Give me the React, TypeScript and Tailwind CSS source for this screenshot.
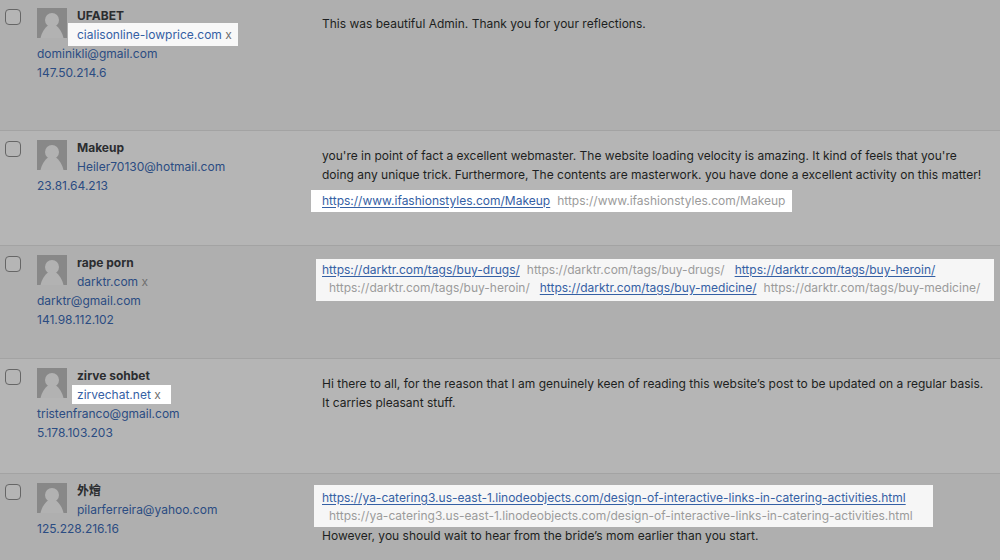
import { ReactNode } from 'react';
import clsx from 'clsx';

interface Comment {
  id: number;
  name: string;
  site?: string;
  siteMarked?: 'wide' | 'narrow';
  email: string;
  ip: string;
  height: string;
  body: ReactNode;
}

function Avatar() {
  return (
    <svg
      viewBox="0 0 30 30"
      className="float-left mr-2.5 mt-0.5 h-[30px] w-[30px]"
      aria-hidden="true"
    >
      <rect width="30" height="30" fill="#888888" />
      <circle cx="15" cy="12" r="7" fill="#b2b2b2" />
      <path d="M3.500 30C4.500 25 7.500 20 11.500 17H18.500C22.500 20 25.500 25 26.500 30Z" fill="#b2b2b2" />
    </svg>
  );
}

function UrlLink({ href }: { href: string }) {
  return (
    <a href={href} className="text-[#3560a4] underline underline-offset-2">
      {href}
    </a>
  );
}

function UrlText({ children }: { children: ReactNode }) {
  return <span className="ml-[7px] text-[#9b9b9b]">{children}</span>;
}

const comments: Comment[] = [
  {
    id: 1,
    name: 'UFABET',
    site: 'cialisonline-lowprice.com',
    siteMarked: 'wide',
    email: 'dominikli@gmail.com',
    ip: '147.50.214.6',
    height: 'h-[131px]',
    body: <p>This was beautiful Admin. Thank you for your reflections.</p>,
  },
  {
    id: 2,
    name: 'Makeup',
    email: 'Heiler70130@hotmail.com',
    ip: '23.81.64.213',
    height: 'h-[115px]',
    body: (
      <>
        <p>
          you're in point of fact a excellent webmaster. The website loading velocity is amazing. It kind of feels that you're
          <br />
          doing any unique trick. Furthermore, The contents are masterwork. you have done a excellent activity on this matter!
        </p>
        <p className="-ml-[11px] mt-1.5 w-fit bg-white py-0.5 pl-[11px] pr-[7px] leading-[18px]">
          <UrlLink href="https://www.ifashionstyles.com/Makeup" />
          <UrlText>https://www.ifashionstyles.com/Makeup</UrlText>
        </p>
      </>
    ),
  },
  {
    id: 3,
    name: 'rape porn',
    site: 'darktr.com',
    email: 'darktr@gmail.com',
    ip: '141.98.112.102',
    height: 'h-[113px]',
    body: (
      <p className="-ml-1.5 -mt-0.5 w-fit whitespace-nowrap bg-[#f6f6f6] pb-1 pl-1.5 pr-3.5 pt-0.5 leading-[18px]">
        <UrlLink href="https://darktr.com/tags/buy-drugs/" />
        <UrlText>https://darktr.com/tags/buy-drugs/</UrlText>
        <span className="ml-2.5">
          <UrlLink href="https://darktr.com/tags/buy-heroin/" />
        </span>
        <br />
        <UrlText>https://darktr.com/tags/buy-heroin/</UrlText>
        <span className="ml-2.5">
          <UrlLink href="https://darktr.com/tags/buy-medicine/" />
        </span>
        <UrlText>https://darktr.com/tags/buy-medicine/</UrlText>
      </p>
    ),
  },
  {
    id: 4,
    name: 'zirve sohbet',
    site: 'zirvechat.net',
    siteMarked: 'narrow',
    email: 'tristenfranco@gmail.com',
    ip: '5.178.103.203',
    height: 'h-[115px]',
    body: (
      <p>
        Hi there to all, for the reason that I am genuinely keen of reading this website’s post to be updated on a regular basis.
        <br />
        It carries pleasant stuff.
      </p>
    ),
  },
  {
    id: 5,
    name: '外燴',
    email: 'pilarferreira@yahoo.com',
    ip: '125.228.216.16',
    height: 'h-[115px]',
    body: (
      <>
        <p className="-ml-2 -mt-1 w-fit whitespace-nowrap bg-[#f6f6f6] pb-0.5 pl-2 pr-5 pt-1 leading-[18px]">
          <UrlLink href="https://ya-catering3.us-east-1.linodeobjects.com/design-of-interactive-links-in-catering-activities.html" />
          <br />
          <UrlText>https://ya-catering3.us-east-1.linodeobjects.com/design-of-interactive-links-in-catering-activities.html</UrlText>
        </p>
        <p className="leading-[18px]">However, you should wait to hear from the bride’s mom earlier than you start.</p>
      </>
    ),
  },
];

function Author({ comment }: { comment: Comment }) {
  const { name, site, siteMarked, email, ip } = comment;

  return (
    <>
      <Avatar />
      <strong className="font-bold text-[#2b2d30]">{name}</strong>
      <br />
      {site && (
        <>
          <span
            className={clsx(
              siteMarked === 'wide' && '-ml-[9px] bg-[#f8f8f8] py-1 pl-[9px] pr-1.5',
              siteMarked === 'narrow' && '-ml-[5px] bg-white py-0.5 pl-[5px] pr-2.5',
            )}
          >
            <a href={`http://${site}`} className={siteMarked ? 'text-[#3560a4]' : 'text-[#2b4c82]'}>
              {site}
            </a>{' '}
            <button type="button" aria-label={`Remove ${site}`} className="text-[#6f6f6f]">
              x
            </button>
          </span>
          <br />
        </>
      )}
      <a href={`mailto:${email}`} className="text-[#2b4c82]">
        {email}
      </a>
      <br />
      <a href={`#${ip}`} className="text-[#2b4c82]">
        {ip}
      </a>
    </>
  );
}

export default function App() {
  return (
    <div className="h-screen overflow-hidden bg-[#afafaf]">
      <table className="-mt-px w-full table-fixed border-collapse text-left font-[Inter,'Noto_Sans_CJK_TC',sans-serif] text-xs leading-[19px] text-[#1d1f21]">
        <tbody>
          {comments.map((comment) => (
            <tr
              key={comment.id}
              className={clsx(
                'border-b border-[#a3a3a3] align-top odd:bg-[#afafaf] even:bg-[#b5b5b5]',
                comment.height,
              )}
            >
              <td className="w-[37px] pl-[5px] pt-2.5">
                <input
                  type="checkbox"
                  aria-label={`Select comment by ${comment.name}`}
                  className="block h-4 w-4 appearance-none rounded border border-[#666666] bg-[#b5b5b5]"
                />
              </td>
              <td className="w-[285px] pt-[7px]">
                <Author comment={comment} />
              </td>
              <td className="whitespace-nowrap pt-[15px]">{comment.body}</td>
            </tr>
          ))}
        </tbody>
      </table>
    </div>
  );
}
